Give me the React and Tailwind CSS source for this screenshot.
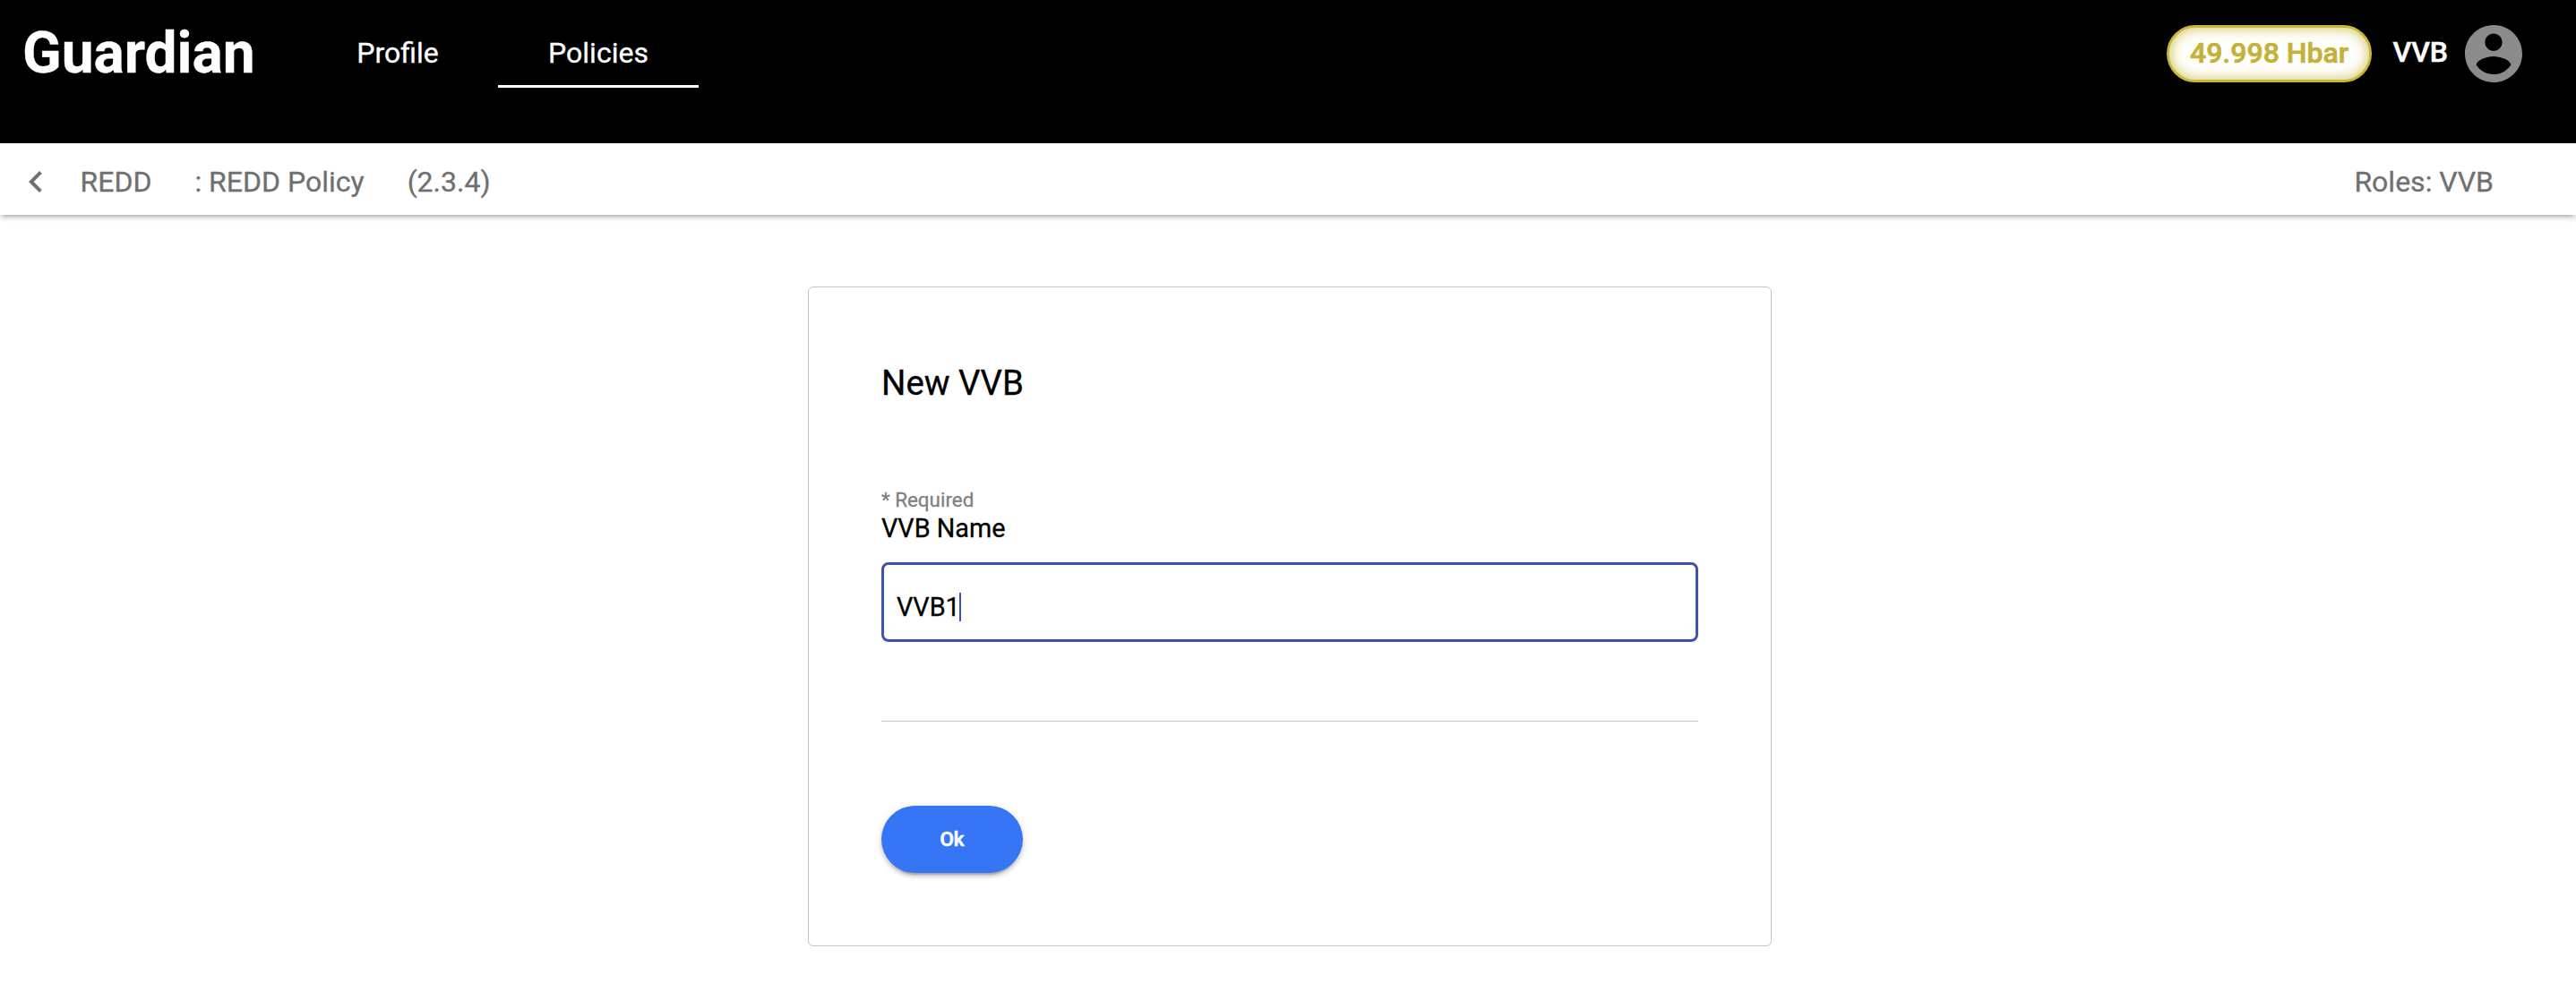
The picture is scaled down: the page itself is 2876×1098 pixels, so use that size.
function TopBar() {
  return (
    <header className="flex h-[160px] items-start bg-black text-white">
      <div className="flex h-[120px] w-full items-center">
        <div className="w-[342px] pl-[25px] text-[64px] leading-none font-bold">Guardian</div>
        <nav className="flex h-[76px] gap-[10px] text-[32px] leading-[75px]">
          <a className="w-[204px] text-center">Profile</a>
          <a className="h-[76px] w-[224px] border-b-[3px] border-white text-center">Policies</a>
        </nav>
        <div className="ml-auto flex items-center pr-[60px]">
          <div className="h-16 w-[229px] rounded-full border-[3px] border-[#c8b83a] bg-white text-center text-[32px] leading-[56px] font-medium text-[#c5b137] shadow-[inset_0_0_15px_#c8b83ae0] [-webkit-text-stroke:0.7px]">
            49.998 Hbar
          </div>
          <div className="ml-[23.5px] w-[80.5px] pb-1 text-[32px] leading-10 font-medium [-webkit-text-stroke:0.5px]">VVB</div>
          <svg className="h-16 w-16 fill-[#8b8b8b]" viewBox="2 2 20 20">
            <path d="M12 2C6.48 2 2 6.48 2 12s4.48 10 10 10 10-4.48 10-10S17.52 2 12 2zm0 3c1.66 0 3 1.34 3 3s-1.34 3-3 3-3-1.34-3-3 1.34-3 3-3zm0 14.2c-2.5 0-4.71-1.28-6-3.22.03-1.99 4-3.08 6-3.08 1.99 0 5.97 1.09 6 3.08-1.29 1.94-3.5 3.22-6 3.22z" />
          </svg>
        </div>
      </div>
    </header>
  );
}

function PolicyBar() {
  return (
    <div className="relative flex h-20 items-center bg-white pt-[6px] pr-[92px] pl-4 text-[32px] leading-10 text-[#707070] shadow-[0_6px_2px_-4px_rgba(0,0,0,0.13),0_4px_4px_0_rgba(0,0,0,0.1),0_2px_10px_0_rgba(0,0,0,0.1)]">
      <svg className="h-12 w-12 fill-[#707070]" viewBox="0 0 24 24">
        <path d="M15.41 7.41 14 6l-6 6 6 6 1.41-1.41L10.83 12z" />
      </svg>
      <div className="ml-[25.5px] flex gap-12">
        <span>REDD</span>
        <span>: REDD Policy</span>
        <span>(2.3.4)</span>
      </div>
      <span className="ml-auto">Roles: VVB</span>
    </div>
  );
}

function VvbForm() {
  return (
    <form className="mt-20 ml-[902px] flex h-[737px] w-[1076px] flex-col rounded-[6px] border border-[#c4c4c4] px-[81px] pt-[83px]">
      <h1 className="text-[38.4px] leading-[48px] text-black">New VVB</h1>
      <div className="mt-[92px] text-[22.4px] leading-7 text-[#808080]">* Required</div>
      <label className="mt-px text-[28.8px] leading-[34px] text-black">VVB Name</label>
      <div className="mt-[21px] flex h-[89px] items-center rounded-[8px] border-[3px] border-[#3f51b5] pt-[11px] pl-[14px] text-[28.8px] leading-8 text-black">
        <span>VVB1</span>
        <span className="-ml-px h-8 w-0.5 bg-[#3f51b5]" />
      </div>
      <hr className="mt-[88px] border-t border-[#c4c4c4]" />
      <button
        type="button"
        className="mt-[94px] h-[75px] w-[158px] rounded-full bg-[#3575f6] text-[22.4px] leading-none font-medium text-white shadow-[0_6px_2px_-4px_rgba(0,0,0,0.2),0_4px_4px_0_rgba(0,0,0,0.14),0_2px_10px_0_rgba(0,0,0,0.12)] [-webkit-text-stroke:0.7px]"
      >
        Ok
      </button>
    </form>
  );
}

export default function App() {
  return (
    <div className="h-[1098px] w-[2876px] overflow-hidden bg-white font-[Roboto,sans-serif] [-webkit-text-stroke:0.3px]">
      <TopBar />
      <PolicyBar />
      <VvbForm />
    </div>
  );
}
